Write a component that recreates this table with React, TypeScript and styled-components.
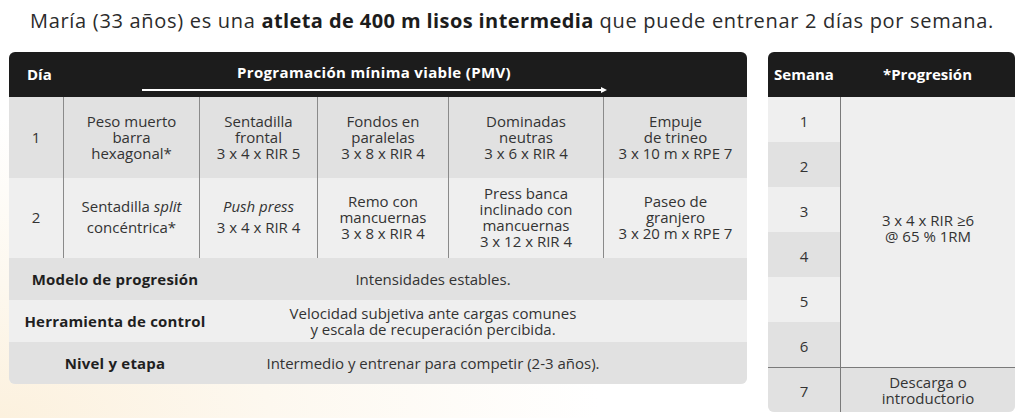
import styled, { createGlobalStyle } from "styled-components";

const GlobalStyle = createGlobalStyle`
    html, body {
        margin: 0;
        padding: 0;
    }
    body {
        width: 1024px;
        height: 418px;
        overflow: hidden;
        font-family: "Open Sans", "Noto Sans", sans-serif;
        background: radial-gradient(ellipse 600px 300px at 0% 100%, #fcf1de 0%, #fdf8ef 45%, #ffffff 100%);
        color: #333;
    }
`;

const Page = styled.div`
    width: 1024px;
    height: 418px;
    display: flex;
    flex-direction: column;
`;

const Intro = styled.p`
    margin: 7px 0 0;
    height: 27px;
    text-align: center;
    font-size: 20px;
    line-height: 27px;
    letter-spacing: 0.7px;
    color: #2b2b2b;
    b {
        font-weight: 700;
        letter-spacing: 0.4px;
        color: #1c1c1c;
    }
`;

const Cards = styled.div`
    display: flex;
    align-items: flex-start;
    gap: 21px;
    margin-top: 18px;
    padding-left: 9px;
`;

const Card = styled.div<{ $width: number }>`
    width: ${(p) => p.$width}px;
    border-radius: 6px;
    overflow: hidden;
    background: #efefef;
`;

const Header = styled.div`
    height: 45px;
    background: #1c1c1c;
    color: #fff;
    display: flex;
    align-items: stretch;
    font-weight: 700;
    font-size: 15px;
`;

const DayHead = styled.div`
    width: 54px;
    padding-left: 18px;
    box-sizing: border-box;
    display: flex;
    align-items: center;
    padding-bottom: 2px;
`;

const PlanHead = styled.div`
    margin-left: 79px;
    width: 466px;
    display: flex;
    flex-direction: column;
    align-items: center;
    padding-top: 10px;
    box-sizing: border-box;
    span {
        margin-right: 2px;
        line-height: 20px;
        letter-spacing: 0.35px;
    }
    svg {
        margin-top: 4px;
        display: block;
    }
`;

const DayGrid = styled.div`
    display: grid;
    grid-template-columns: 54px 136px 118px 131px 155px 144px;
    grid-template-rows: 81px 80px;
`;

const Cell = styled.div<{ $shade: boolean; $edge?: boolean; $loose?: boolean }>`
    background: ${(p) => (p.$shade ? "#e1e1e1" : "#efefef")};
    border-left: ${(p) => (p.$edge ? "none" : "1.5px solid #8a8a8a")};
    display: flex;
    align-items: center;
    justify-content: center;
    text-align: center;
    white-space: pre-line;
    font-size: 15px;
    line-height: ${(p) => (p.$loose ? "21px" : "16px")};
    color: #333;
    padding-bottom: 2px;
    box-sizing: border-box;
`;

const SummaryRow = styled.div<{ $shade: boolean }>`
    display: grid;
    grid-template-columns: 212px 424px 1fr;
    align-items: center;
    height: 42px;
    background: ${(p) => (p.$shade ? "#e1e1e1" : "#efefef")};
`;

const SummaryLabel = styled.div`
    text-align: center;
    font-weight: 700;
    font-size: 15px;
    letter-spacing: 0.2px;
    color: #1f1f1f;
`;

const SummaryValue = styled.div`
    text-align: center;
    white-space: pre-line;
    font-size: 15px;
    line-height: 16px;
    color: #333;
`;

const WeekGrid = styled.div`
    display: grid;
    grid-template-columns: 72px 175px;
    grid-template-rows: 45px repeat(7, 45px);
`;

const WeekHead = styled.div`
    background: #1c1c1c;
    color: #fff;
    font-weight: 700;
    font-size: 15px;
    display: flex;
    align-items: center;
    justify-content: center;
    padding-bottom: 2px;
`;

const WeekNum = styled.div<{ $shade: boolean; $top?: boolean }>`
    background: ${(p) => (p.$shade ? "#e1e1e1" : "#efefef")};
    border-top: ${(p) => (p.$top ? "1.5px solid #7a7a7a" : "none")};
    display: flex;
    align-items: center;
    justify-content: center;
    font-size: 15px;
    color: #333;
    padding-top: 2px;
    box-sizing: border-box;
`;

const Progression = styled.div<{ $last?: boolean }>`
    grid-column: 2;
    grid-row: ${(p) => (p.$last ? "8" : "2 / span 6")};
    background: ${(p) => (p.$last ? "#e1e1e1" : "#efefef")};
    border-left: 1.5px solid #7a7a7a;
    border-top: ${(p) => (p.$last ? "1.5px solid #7a7a7a" : "none")};
    display: flex;
    align-items: center;
    justify-content: center;
    text-align: center;
    white-space: pre-line;
    font-size: 15px;
    line-height: 16px;
    color: #333;
    box-sizing: border-box;
    padding-bottom: ${(p) => (p.$last ? "0" : "8px")};
`;

const days = [
    [
        "1",
        "Peso muerto\nbarra\nhexagonal*",
        "Sentadilla\nfrontal\n3 x 4 x RIR 5",
        "Fondos en\nparalelas\n3 x 8 x RIR 4",
        "Dominadas\nneutras\n3 x 6 x RIR 4",
        "Empuje\nde trineo\n3 x 10 m x RPE 7",
    ],
    [
        "2",
        <>Sentadilla <i>split</i>{"\nconcéntrica*"}</>,
        <><i>Push press</i>{"\n3 x 4 x RIR 4"}</>,
        "Remo con\nmancuernas\n3 x 8 x RIR 4",
        "Press banca\ninclinado con\nmancuernas\n3 x 12 x RIR 4",
        "Paseo de\ngranjero\n3 x 20 m x RPE 7",
    ],
];

const summary = [
    { label: "Modelo de progresión", value: "Intensidades estables." },
    {
        label: "Herramienta de control",
        value: "Velocidad subjetiva ante cargas comunes\ny escala de recuperación percibida.",
    },
    { label: "Nivel y etapa", value: "Intermedio y entrenar para competir (2-3 años)." },
];

function App() {
    return (
        <>
            <GlobalStyle />
            <Page>
                <Intro>
                    María (33 años) es una <b>atleta de 400 m lisos intermedia</b> que puede entrenar 2 días por semana.
                </Intro>
                <Cards>
                    <Card $width={738}>
                        <Header>
                            <DayHead>Día</DayHead>
                            <PlanHead>
                                <span>Programación mínima viable (PMV)</span>
                                <svg width="466" height="8" viewBox="0 0 466 8">
                                    <line x1="0" y1="4" x2="460" y2="4" stroke="#fff" strokeWidth="2" strokeLinecap="round" />
                                    <path d="M459 1 L465 4 L459 7 Z" fill="#fff" />
                                </svg>
                            </PlanHead>
                        </Header>
                        <DayGrid>
                            {days.map((row, r) =>
                                row.map((content, c) => (
                                    <Cell
                                        key={`${r}-${c}`}
                                        $shade={r === 0}
                                        $edge={c === 0}
                                        $loose={typeof content !== "string"}
                                    >
                                        <div>{content}</div>
                                    </Cell>
                                ))
                            )}
                        </DayGrid>
                        {summary.map((s, i) => (
                            <SummaryRow key={s.label} $shade={i !== 1}>
                                <SummaryLabel>{s.label}</SummaryLabel>
                                <SummaryValue>{s.value}</SummaryValue>
                            </SummaryRow>
                        ))}
                    </Card>
                    <Card $width={247}>
                        <WeekGrid>
                            <WeekHead>Semana</WeekHead>
                            <WeekHead>*Progresión</WeekHead>
                            {[1, 2, 3, 4, 5, 6, 7].map((w) => (
                                <WeekNum key={w} $shade={w % 2 === 0 || w === 7} $top={w === 7} style={{ gridColumn: 1, gridRow: w + 1 }}>
                                    {w}
                                </WeekNum>
                            ))}
                            <Progression>
                                <div>{"3 x 4 x RIR ≥6\n@ 65 % 1RM"}</div>
                            </Progression>
                            <Progression $last>
                                <div>{"Descarga o\nintroductorio"}</div>
                            </Progression>
                        </WeekGrid>
                    </Card>
                </Cards>
            </Page>
        </>
    );
}

export default App;
